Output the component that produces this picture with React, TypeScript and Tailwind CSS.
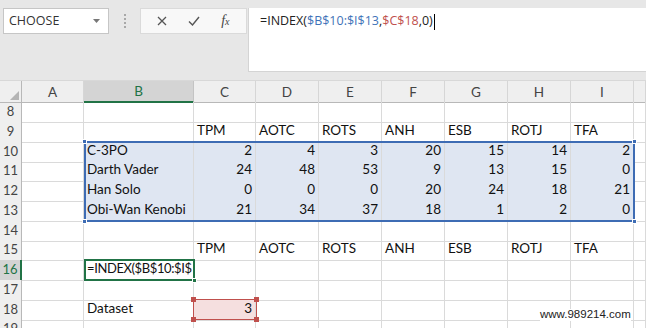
import type React from "react";

type RowDef = { n: number; h: string; cells: string[] };

const letters = ["A", "B", "C", "D", "E", "F", "G", "H", "I", ""];
const heads = ["", "", "TPM", "AOTC", "ROTS", "ANH", "ESB", "ROTJ", "TFA", ""];

const rows: RowDef[] = [
  { n: 8, h: "h-[20px]", cells: [] },
  { n: 9, h: "h-[20px]", cells: heads },
  { n: 10, h: "h-[19px]", cells: ["", "C-3PO", "2", "4", "3", "20", "15", "14", "2", ""] },
  { n: 11, h: "h-[20px]", cells: ["", "Darth Vader", "24", "48", "53", "9", "13", "15", "0", ""] },
  { n: 12, h: "h-[20px]", cells: ["", "Han Solo", "0", "0", "0", "20", "24", "18", "21", ""] },
  { n: 13, h: "h-[20px]", cells: ["", "Obi-Wan Kenobi", "21", "34", "37", "18", "1", "2", "0", ""] },
  { n: 14, h: "h-[19px]", cells: [] },
  { n: 15, h: "h-[20px]", cells: heads },
  { n: 16, h: "h-[20px]", cells: ["", "=INDEX($B$10:$I$", "", "", "", "", "", "", "", ""] },
  { n: 17, h: "h-[20px]", cells: [] },
  { n: 18, h: "h-[19px]", cells: ["", "Dataset", "3", "", "", "", "", "", "", ""] },
  { n: 19, h: "h-[20px]", cells: [] },
];

const gridCols = "grid grid-cols-[22px_62px_110px_62px_63px_63px_63px_63px_63px_63px_12px]";

const Handle: React.FC<{ className: string }> = ({ className }) => (
  <div className={`absolute w-[5px] h-[5px] ${className}`} />
);

function FormulaBar() {
  return (
    <div className="flex h-[72px] pt-2 font-['Open_Sans',sans-serif] text-[12.5px]">
      <div className="ml-[3px] w-[106px] h-[26px] bg-white border border-[#c6c6c6] flex items-center justify-between pl-[5px] pr-[8px] text-[#333]">
        <span>CHOOSE</span>
        <svg width="7" height="4" viewBox="0 0 7 4"><path d="M0 0h7L3.5 4z" fill="#777" /></svg>
      </div>
      <div className="w-[31px] flex flex-col items-center justify-center gap-[2px] h-[26px]">
        <span className="w-[2px] h-[2px] bg-[#a8a8a8]" />
        <span className="w-[2px] h-[2px] bg-[#a8a8a8]" />
        <span className="w-[2px] h-[2px] bg-[#a8a8a8]" />
        <span className="w-[2px] h-[2px] bg-[#a8a8a8]" />
      </div>
      <div className="w-[107px] h-[26px] bg-[#f8f8f8] border border-[#dadada] flex items-center justify-around px-[6px]">
        <svg width="10" height="10" viewBox="0 0 10 10"><path d="M1 1l8 8M9 1l-8 8" stroke="#555" strokeWidth="1.3" /></svg>
        <svg width="12" height="10" viewBox="0 0 12 10"><path d="M1 5.5l3.5 3.5L11 1" stroke="#555" strokeWidth="1.4" fill="none" /></svg>
        <span className="font-['Liberation_Serif',serif] italic text-[14px] text-[#444] leading-none">f<span className="text-[10px]">x</span></span>
      </div>
      <div className="ml-[1px] flex-1 h-[64px] bg-white border-l border-b border-[#d4d4d4] pl-[11px] pt-[4px] text-[#222]">
        <span>=INDEX(</span>
        <span className="text-[#3f73b8]">$B$10:$I$13</span>
        <span>,</span>
        <span className="text-[#c0504d]">$C$18</span>
        <span>,0)</span>
        <span className="inline-block w-px h-[16px] bg-black align-middle ml-px" />
      </div>
    </div>
  );
}

function Sheet() {
  return (
    <div className="relative font-['Lato',sans-serif] text-[13.5px] text-[#111]">
      <div className={`${gridCols} h-[22px] bg-[#efefef] border-t border-[#d8d8d8]`}>
        <div className="relative border-r border-b border-[#b8b8b8]">
          <svg className="absolute right-[2px] bottom-[2px]" width="9" height="9" viewBox="0 0 9 9"><path d="M9 0v9H0z" fill="#b4b4b4" /></svg>
        </div>
        {letters.map((l, i) => (
          <div
            key={i}
            className={
              l === "B"
                ? "flex items-center justify-center bg-[#d4d4d4] border-r border-[#c4c4c4] border-b-2 border-b-[#217346] text-[#217346]"
                : "flex items-center justify-center border-r border-[#d6d6d6] border-b border-b-[#b8b8b8] text-[#444]"
            }
          >
            {l}
          </div>
        ))}
      </div>
      {rows.map((r) => (
        <div key={r.n} className={`${gridCols} ${r.h} bg-white`}>
          <div
            className={
              r.n === 16
                ? "flex items-center justify-center bg-[#d4d4d4] border-r-2 border-r-[#217346] border-b border-[#c4c4c4] text-[#217346] text-[13px]"
                : "flex items-center justify-center bg-[#efefef] border-r border-r-[#b8b8b8] border-b border-[#d6d6d6] text-[#444] text-[13px]"
            }
          >
            {r.n}
          </div>
          {letters.map((_, i) => {
            const v = r.cells[i] ?? "";
            const inRange = r.n >= 10 && r.n <= 13 && i >= 1 && i <= 8;
            const isRed = r.n === 18 && i === 2;
            const numeric = v !== "" && /^\d+$/.test(v);
            const bg = inRange ? "bg-[#dfe6f2]" : isRed ? "bg-[#f5dfdf]" : "";
            const tight = v.startsWith("=") ? "tracking-[-0.4px] text-[13px]" : "";
            return (
              <div
                key={i}
                className={`flex items-end pb-[1px] overflow-hidden whitespace-nowrap border-r border-b border-[#dadada] ${bg} ${tight} ${numeric ? "justify-end pr-[3px]" : "justify-start pl-[3px]"}`}
              >
                {v}
              </div>
            );
          })}
        </div>
      ))}

      {/* reference range B10:I13 */}
      <div className="absolute left-[84px] top-[61px] w-[551px] h-[81px] border-2 border-[#3e6cb4] pointer-events-none">
        <Handle className="-left-[4px] -top-[4px] bg-[#3e6cb4] border border-white" />
        <Handle className="-right-[4px] -top-[4px] bg-[#3e6cb4] border border-white" />
        <Handle className="-left-[4px] -bottom-[4px] bg-[#3e6cb4] border border-white" />
        <Handle className="-right-[4px] -bottom-[4px] bg-[#3e6cb4] border border-white" />
      </div>

      {/* active cell B16 */}
      <div className="absolute left-[84px] top-[179px] w-[111px] h-[22px] border-2 border-[#217346]">
        <Handle className="-right-[4px] -bottom-[4px] bg-[#217346] border border-white" />
      </div>

      {/* reference C18 */}
      <div className="absolute left-[193px] top-[219px] w-[64px] h-[21px] border-[1.5px] border-[#c0504d]">
        <Handle className="-left-[3px] -top-[3px] bg-[#c0504d]" />
        <Handle className="-right-[3px] -top-[3px] bg-[#c0504d]" />
        <Handle className="-left-[3px] -bottom-[3px] bg-[#c0504d]" />
        <Handle className="-right-[3px] -bottom-[3px] bg-[#c0504d]" />
      </div>

      <div className="absolute left-[540px] top-[229px] font-['Liberation_Sans',sans-serif] text-[11.5px] text-[#222] bg-white leading-none">
        www.989214.com
      </div>
    </div>
  );
}

export default function App() {
  return (
    <div className="w-[646px] h-[328px] overflow-hidden bg-[#e7e7e7]">
      <FormulaBar />
      <div className="h-2" />
      <Sheet />
    </div>
  );
}
